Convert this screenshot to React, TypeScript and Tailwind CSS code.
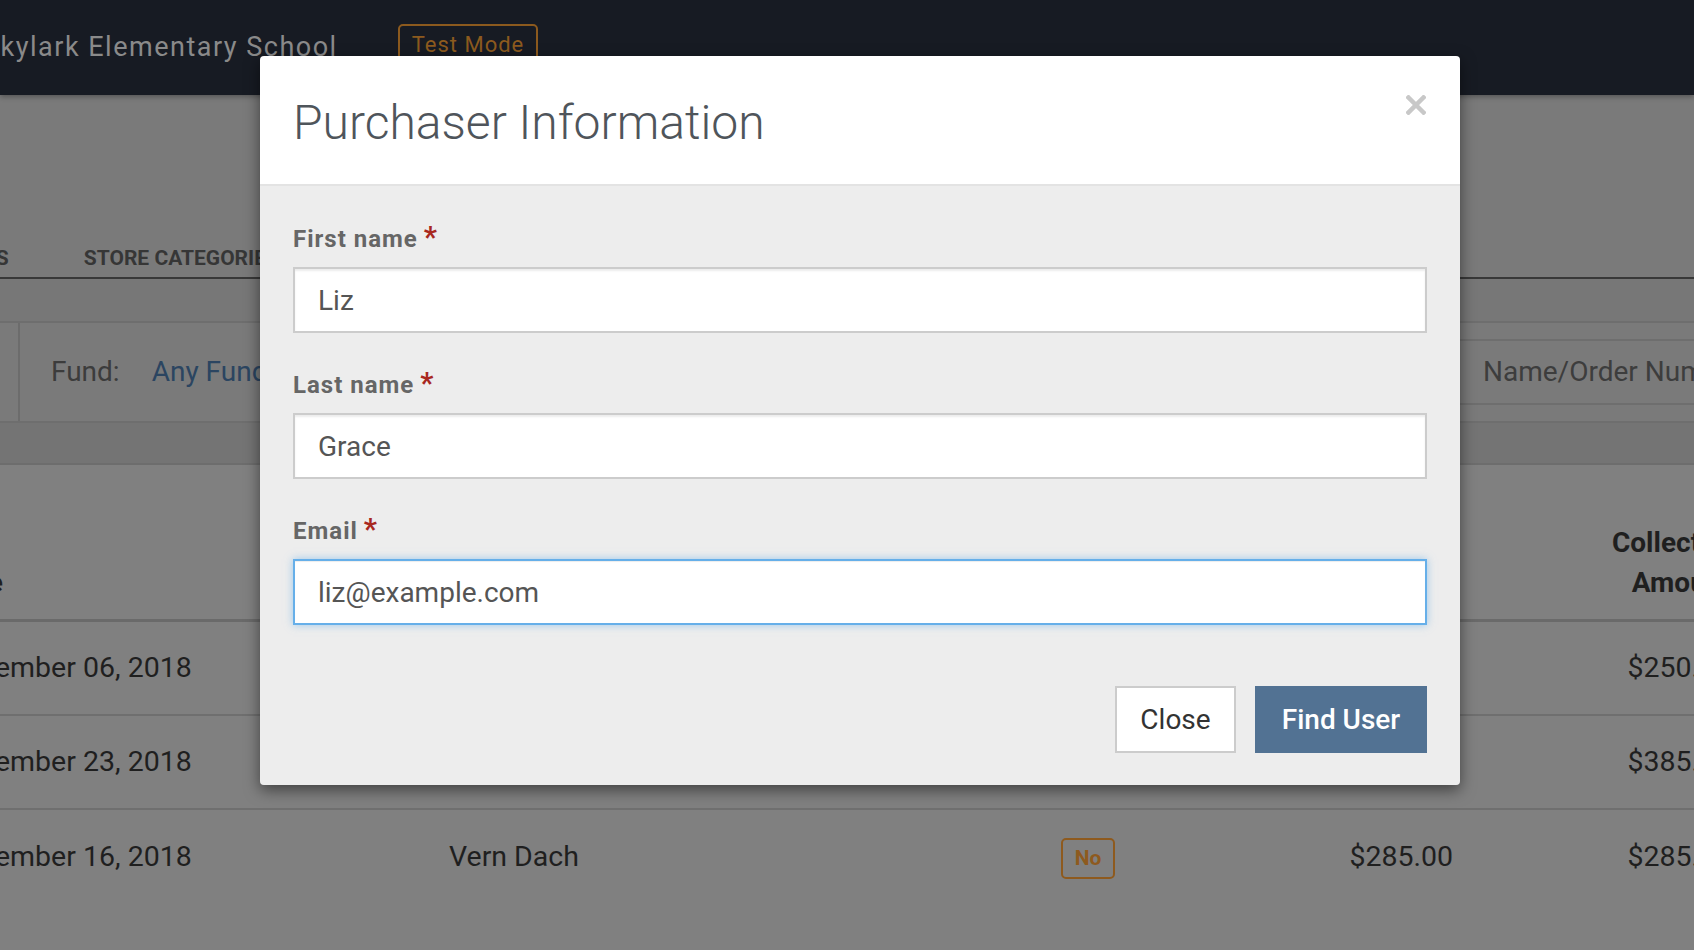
import React from "react";

type Row = { date: string; name: string; paid: string; amount: string; collected: string };

const rows: Row[] = [
    { date: "November 06, 2018", name: "Liz Grace", paid: "Yes", amount: "$250.00", collected: "$250.00" },
    { date: "November 23, 2018", name: "Jana Moen", paid: "Yes", amount: "$385.00", collected: "$385.00" },
    { date: "November 16, 2018", name: "Vern Dach", paid: "No", amount: "$285.00", collected: "$285.00" },
];

function Field({ label, value, focused }: { label: string; value: string; focused?: boolean }) {
    return (
        <div className="flex flex-col">
            <label className="flex items-start h-[28px] text-[24px] leading-[28px] font-bold tracking-[1px] text-[#666666]">
                {label}
                <span className="relative top-[-2px] ml-[6px] text-[29px] leading-[28px] text-[#a8281f]">*</span>
            </label>
            <input
                readOnly
                value={value}
                className={
                    focused
                        ? "mt-[14px] h-[66px] w-full bg-white px-[23px] text-[28px] text-[#555555] outline-none border-2 border-[#66afe9] shadow-[inset_0_1px_1px_rgba(0,0,0,0.075),0_0_8px_rgba(102,175,233,0.6)]"
                        : "mt-[14px] h-[66px] w-full bg-white px-[23px] text-[28px] text-[#555555] outline-none border-2 border-[#cccccc] shadow-[inset_0_2px_2px_rgba(0,0,0,0.075)]"
                }
            />
        </div>
    );
}

export default function App() {
    return (
        <div className="relative w-[1694px] h-[950px] overflow-hidden flex flex-col bg-[#7a7a7a] font-['Roboto',sans-serif]">
            {/* top bar */}
            <header className="relative z-10 h-[95px] shrink-0 flex items-start bg-[#171b23] shadow-[0_2px_5px_rgba(0,0,0,0.3)] whitespace-nowrap">
                <span className="ml-[-17px] mt-[31px] text-[27px] leading-[32px] tracking-[1.5px] text-[#8a8a8a]">Skylark Elementary School</span>
                <span className="ml-[60px] mt-[24px] h-[40px] px-[12px] border-2 border-[#8c5a1e] rounded-[5px] text-[22px] leading-[38px] tracking-[1px] text-[#8c5a1e]">
                    Test Mode
                </span>
            </header>

            {/* tabs */}
            <nav className="h-[184px] shrink-0 flex items-end gap-[75px] border-b-2 border-[#383838] whitespace-nowrap">
                <span className="ml-[-71px] pb-[7px] text-[21px] leading-[24px] font-bold text-[#363636]">ORDERS</span>
                <span className="pb-[7px] text-[21px] leading-[24px] font-bold text-[#363636]">STORE CATEGORIES</span>
                <span className="pb-[7px] text-[21px] leading-[24px] font-bold text-[#363636]">PRODUCTS</span>
            </nav>

            <div className="h-[42px] shrink-0 bg-[#777777]"></div>

            {/* filters */}
            <div className="h-[102px] shrink-0 flex items-center border-y-2 border-[#6e6e6e] bg-[#7a7a7a] whitespace-nowrap">
                <div className="w-[20px] self-stretch border-r-2 border-[#6c6c6c]"></div>
                <span className="ml-[31px] text-[28px] text-[#3c3c3c]">Fund:</span>
                <span className="ml-[32px] text-[28px] text-[#2b4561]">Any Fund</span>
                <div className="ml-auto w-[257px] h-[66px] flex items-center border-y-2 border-l-2 border-[#6e6e6e] pl-[44px] text-[28px] text-[#3d3d3d]">
                    Name/Order Number
                </div>
            </div>

            <div className="h-[42px] shrink-0 bg-[#747474] border-b-2 border-[#6d6d6d]"></div>

            {/* orders table */}
            <div className="flex-1 bg-[#808080]">
                <div className="ml-[-55px] w-[1786px] text-[#1f1f1f] whitespace-nowrap">
                    <div className="grid grid-cols-[504px_612px_120px_272px_278px] items-end h-[157px] pb-[16px] border-b-[3px] border-[#6a6a6a] text-[28px] leading-[40px] font-bold">
                        <span>Date</span>
                        <span>Purchaser</span>
                        <span>Paid</span>
                        <span className="text-right">Amount</span>
                        <span className="ml-auto w-[140px] text-right whitespace-normal">Collected Amount</span>
                    </div>
                    {rows.map((row, index) => (
                        <div
                            key={index}
                            className={
                                index < rows.length - 1
                                    ? "grid grid-cols-[504px_612px_120px_272px_278px] items-center h-[94px] border-b-2 border-[#6f6f6f] text-[28.5px]"
                                    : "grid grid-cols-[504px_612px_120px_272px_278px] items-center h-[94px] text-[28.5px]"
                            }
                        >
                            <span>{row.date}</span>
                            <span>{row.name}</span>
                            <span>
                                <span className="inline-flex items-center justify-center h-[41px] w-[54px] border-2 border-[#8e5a1e] rounded-[5px] text-[21px] font-bold text-[#8e5a1e]">
                                    {row.paid}
                                </span>
                            </span>
                            <span className="text-right">{row.amount}</span>
                            <span className="text-right">{row.collected}</span>
                        </div>
                    ))}
                </div>
            </div>

            {/* purchaser modal */}
            <div className="absolute left-[260px] top-[56px] z-20 w-[1200px] rounded-[4px] overflow-hidden shadow-[0_5px_15px_rgba(0,0,0,0.5)]">
                <div className="h-[130px] flex items-center justify-between bg-white border-b-2 border-[#e3e3e3] pl-[33px] pr-[34px]">
                    <h2 className="mt-[6px] text-[48px] leading-[60px] font-light text-[#4f555b]">Purchaser Information</h2>
                    <svg className="self-start mt-[39px]" width="20" height="20" viewBox="0 0 20 20">
                        <path d="M2.5 2.5 L17.5 17.5 M17.5 2.5 L2.5 17.5" stroke="#c8c8c8" strokeWidth="4.5" strokeLinecap="square" />
                    </svg>
                </div>
                <div className="bg-[#ededed] px-[33px] pt-[39px] pb-[32px]">
                    <div className="flex flex-col gap-[38px]">
                        <Field label="First name" value="Liz" />
                        <Field label="Last name" value="Grace" />
                        <Field label="Email" value="liz@example.com" focused />
                    </div>
                    <div className="mt-[61px] flex justify-end gap-[19px]">
                        <button className="h-[67px] w-[121px] bg-white border-2 border-[#cccccc] text-[28px] text-[#333333]">Close</button>
                        <button className="h-[67px] w-[172px] bg-[#527293] text-[28px] font-medium text-white">Find User</button>
                    </div>
                </div>
            </div>
        </div>
    );
}
